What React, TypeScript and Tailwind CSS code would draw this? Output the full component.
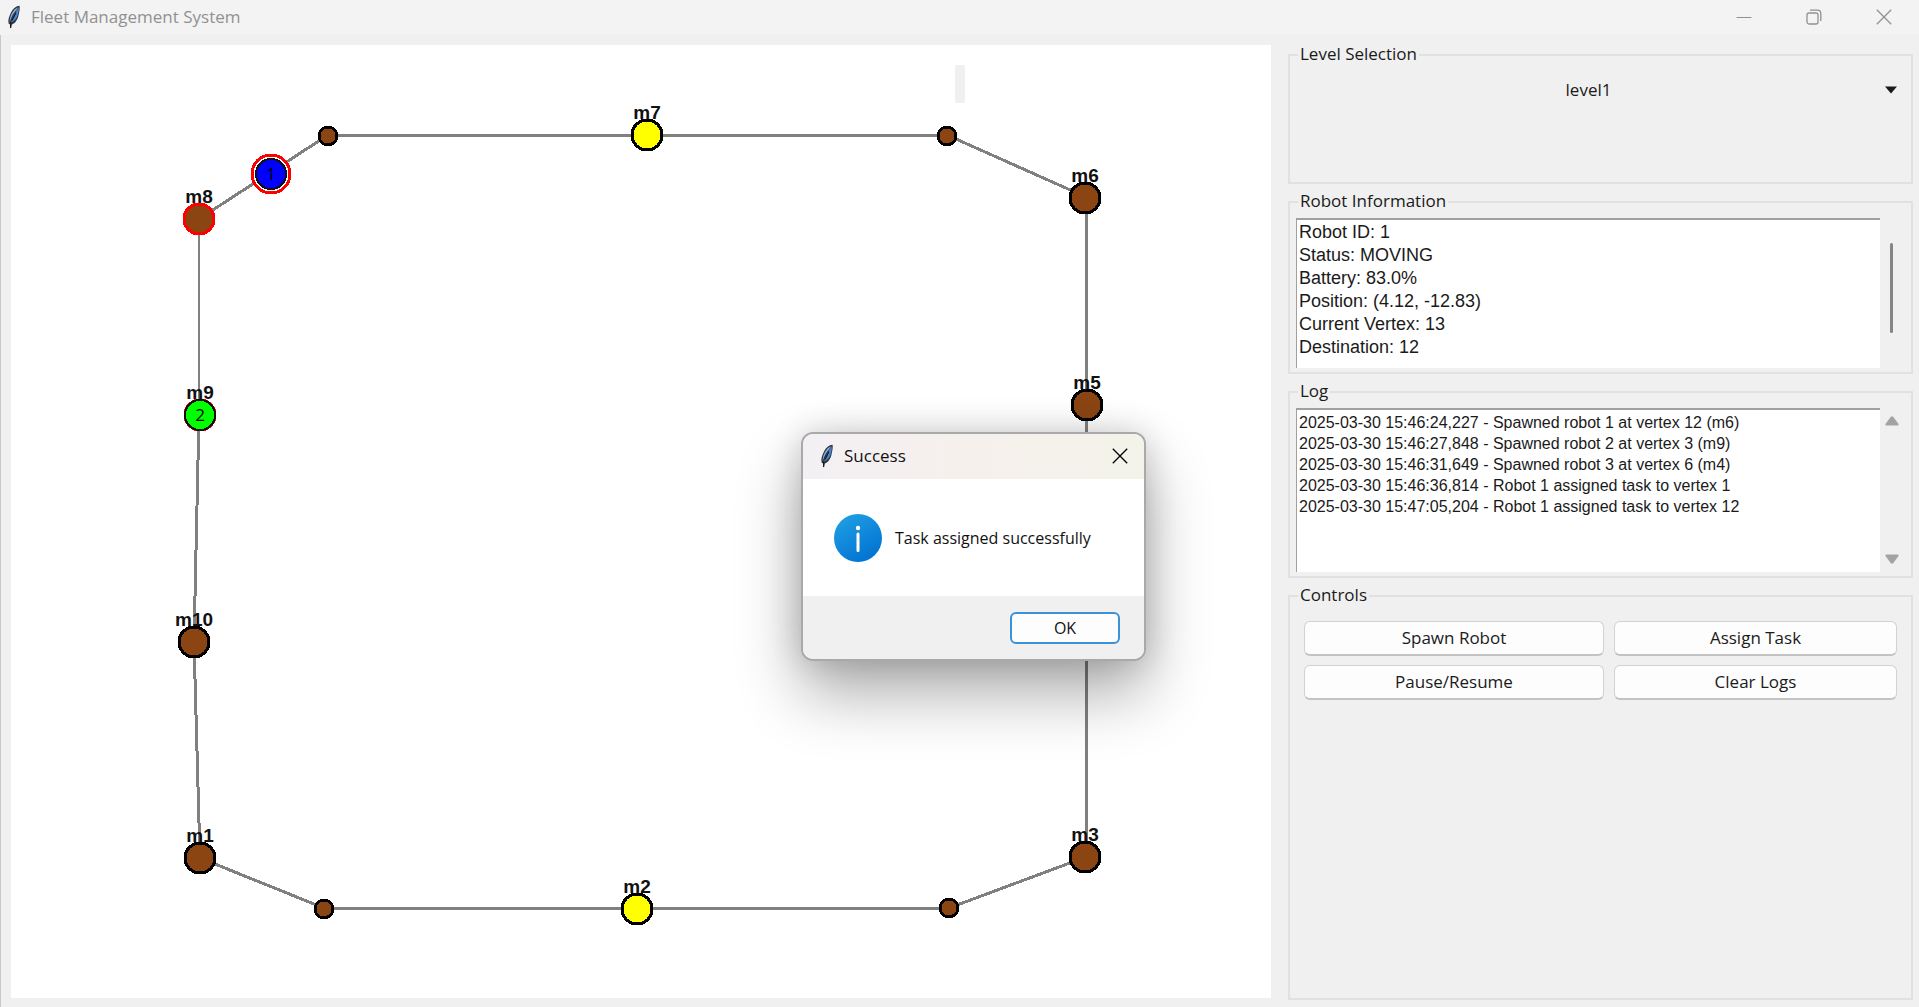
import { ReactNode } from "react";

type Vertex = { x: number; y: number; r: number; fill?: string; ring?: string; label?: string };

const VERTICES: Vertex[] = [
  { x: 317, y: 91, r: 9 },
  { x: 636, y: 90, r: 15, fill: "#ffff00", label: "m7" },
  { x: 936, y: 91, r: 9 },
  { x: 1074, y: 153, r: 15, label: "m6" },
  { x: 1076, y: 360, r: 15, label: "m5" },
  { x: 1075, y: 600, r: 15, ring: "#ff0000", label: "m4" },
  { x: 1074, y: 812, r: 15, label: "m3" },
  { x: 938, y: 863, r: 9 },
  { x: 626, y: 864, r: 15, fill: "#ffff00", label: "m2" },
  { x: 313, y: 864, r: 9 },
  { x: 189, y: 813, r: 15, label: "m1" },
  { x: 183, y: 597, r: 15, label: "m10" },
  { x: 189, y: 370, r: 15, ring: "#ff0000", label: "m9" },
  { x: 188, y: 174, r: 15, ring: "#ff0000", label: "m8" },
];

const TRACK = "317,90 936,90 1075,152 1075,812 938,863 313,863 189,813 183,597 188,370 188,174";

const ROBOTS = [
  { id: 1, x: 260, y: 129, fill: "#0000ff", selected: true },
  { id: 2, x: 189, y: 370, fill: "#00ff00", selected: false },
  { id: 3, x: 1075, y: 600, fill: "#00a040", selected: false },
];

const ROBOT_INFO = `Robot ID: 1
Status: MOVING
Battery: 83.0%
Position: (4.12, -12.83)
Current Vertex: 13
Destination: 12`;

const LOG = `2025-03-30 15:46:24,227 - Spawned robot 1 at vertex 12 (m6)
2025-03-30 15:46:27,848 - Spawned robot 2 at vertex 3 (m9)
2025-03-30 15:46:31,649 - Spawned robot 3 at vertex 6 (m4)
2025-03-30 15:46:36,814 - Robot 1 assigned task to vertex 1
2025-03-30 15:47:05,204 - Robot 1 assigned task to vertex 12`;

function Feather() {
  return (
    <svg viewBox="0 0 14 24" className="h-6 w-3.5 shrink-0" aria-hidden="true">
      <path d="M12.6 .8C9 1 6 3.500 4 7.500 2 11.500 .8 15 1.600 18.500L3 19.500 3.800 23.500 4.800 19.500C8 18.500 10.500 15 11.500 10.500 12.200 7.500 13 4 12.600 .8Z" fill="#2c3440" />
      <path d="M11.500 2.200C8.500 3 6.300 5.500 4.800 8.600 3.300 11.700 2.400 14.500 2.800 17.200 3.800 13 6 8 11.500 2.200Z" fill="#8fb4e0" />
      <path d="M11.800 2.500C8 7 5.500 12 4.200 17.600 7.600 16 9.800 13.500 10.700 10 11.400 7.500 11.900 5.500 11.800 2.500Z" fill="#4a86cf" />
      <path d="M9 7.500 5 15.500M3.600 18V23" stroke="#151a20" strokeWidth="1.200" fill="none" />
    </svg>
  );
}

function CloseIcon() {
  return (
    <svg viewBox="0 0 16 16" className="size-4" fill="none" stroke="currentColor" strokeWidth="1.300" aria-hidden="true">
      <path d="M.8 .8 15.200 15.200M15.200 .8 .8 15.200" />
    </svg>
  );
}

function TitleBar() {
  return (
    <header className="flex h-[35px] shrink-0 items-center bg-[#f3f3f3] pb-0.5 pl-[7px] text-[#919191]">
      <Feather />
      <h1 className="ml-2.5 flex-1 font-['Open_Sans',sans-serif] text-[17px] leading-6">Fleet Management System</h1>
      <button type="button" aria-label="Minimize" className="flex h-full w-[70px] items-center justify-center">
        <svg viewBox="0 0 16 16" className="size-4" stroke="currentColor" aria-hidden="true"><path d="M.5 8.500H15.500" /></svg>
      </button>
      <button type="button" aria-label="Restore" className="flex h-full w-[70px] items-center justify-center">
        <svg viewBox="0 0 16 16" className="size-4" fill="none" stroke="currentColor" strokeWidth="1.300" aria-hidden="true">
          <rect x="1" y="4" width="11" height="11" rx="2" />
          <path d="M4 1.200H11.500A3.300 3.300 0 0 1 14.800 4.500V12" />
        </svg>
      </button>
      <button type="button" aria-label="Close" className="flex h-full w-[70px] items-center justify-center">
        <CloseIcon />
      </button>
    </header>
  );
}

function FleetMap() {
  return (
    <svg className="h-full w-full" role="img" aria-label="Fleet map" shapeRendering="crispEdges">
      <rect x="944" y="20" width="10" height="38" fill="#f0f0f0" />
      <polygon points={TRACK} fill="none" stroke="#808080" strokeWidth="3" />
      {VERTICES.map((v, i) => (
        <g key={i}>
          <circle cx={v.x} cy={v.y} r={v.r} fill={v.fill ?? "#8b4513"} stroke={v.ring ?? "#000"} strokeWidth="3" />
          {v.label && (
            <text x={v.x} y={v.y - 16} textAnchor="middle" className="font-['Liberation_Sans',sans-serif] text-[19px] font-bold" fill="#111">
              {v.label}
            </text>
          )}
        </g>
      ))}
      {ROBOTS.map((r) => (
        <g key={r.id}>
          {r.selected && <circle cx={r.x} cy={r.y} r="19" fill="#fff" stroke="#f00" strokeWidth="3" />}
          <circle cx={r.x} cy={r.y} r="15" fill={r.fill} stroke="#111" strokeWidth="2" />
          <text x={r.x} y={r.y + 6} textAnchor="middle" className="font-['Open_Sans',sans-serif] text-[17px]" fill="#000">
            {r.id}
          </text>
        </g>
      ))}
    </svg>
  );
}

function Group({ title, className, children }: { title: string; className: string; children: ReactNode }) {
  return (
    <section aria-label={title} className={`flex flex-col border-2 border-[#e1e1e1] ${className}`}>
      <h2 className="-mt-[13px] ml-2 h-[23px] self-start bg-[#f0f0f0] px-0.5 text-[17px] leading-[22px]">{title}</h2>
      {children}
    </section>
  );
}

const TEXT_BOX =
  "min-w-0 flex-1 resize-none overflow-hidden border-t-2 border-l border-[#a0a0a0] bg-white pl-0.5 font-['Liberation_Sans',sans-serif] outline-none";

function Sidebar() {
  return (
    <aside className="flex w-[625px] shrink-0 flex-col gap-[17px] pt-[19px] font-['Open_Sans',sans-serif] text-[#1a1a1a]">
      <Group title="Level Selection" className="h-[130px]">
        <div className="relative mt-2.5">
          <select aria-label="Level" className="h-7 w-full appearance-none bg-transparent pr-6 text-center text-[17px] [text-align-last:center]">
            <option>level1</option>
          </select>
          <svg viewBox="0 0 12 8" className="pointer-events-none absolute top-2.5 right-3.5 h-2 w-3" aria-hidden="true"><path d="M0 .5H12L6 7.500Z" fill="#1a1a1a" /></svg>
        </div>
      </Group>
      <Group title="Robot Information" className="h-[173px]">
        <div className="mt-[5px] mb-1 ml-1.5 flex flex-1">
          <textarea aria-label="Robot Information" readOnly value={ROBOT_INFO} className={`${TEXT_BOX} pt-px text-lg leading-[23px]`} />
          <div className="flex w-[31px] justify-center pt-[25px] pr-2">
            <div className="h-[90px] w-[3px] rounded-full bg-[#858585]" />
          </div>
        </div>
      </Group>
      <Group title="Log" className="h-[187px]">
        <div className="mt-[5px] mb-1 ml-1.5 flex flex-1">
          <textarea aria-label="Log" readOnly value={LOG} className={`${TEXT_BOX} pt-0.5 text-base leading-[21px]`} />
          <div className="flex w-[31px] flex-col items-center justify-between py-2 pr-2">
            <svg viewBox="0 0 14 10" className="h-2.5 w-3.5" aria-hidden="true"><path d="M6 .5H8L13.500 8V9.500H.5V8Z" fill="#a3a3a3" /></svg>
            <svg viewBox="0 0 14 10" className="h-2.5 w-3.5" aria-hidden="true"><path d="M6 9.500H8L13.500 2V.5H.5V2Z" fill="#a3a3a3" /></svg>
          </div>
        </div>
      </Group>
      <Group title="Controls" className="mb-[7px] flex-1">
        <div className="mx-3.5 mt-3.5 grid grid-cols-[300fr_283fr] gap-x-2.5 gap-y-[9px]">
          {["Spawn Robot", "Assign Task", "Pause/Resume", "Clear Logs"].map((t) => (
            <button key={t} type="button" className="h-[35px] rounded-md border border-b-2 border-[#d2d2d2] border-b-[#c3c3c3] bg-[#fdfdfd] text-[17px] leading-6">
              {t}
            </button>
          ))}
        </div>
      </Group>
    </aside>
  );
}

function SuccessDialog() {
  return (
    <div
      role="dialog"
      aria-label="Success"
      className="absolute top-[432px] left-[801px] flex h-[229px] w-[345px] flex-col overflow-hidden rounded-xl border-2 border-[#a9a9a9] bg-white font-['Open_Sans',sans-serif] text-[#111] shadow-[0_32px_64px_rgba(0,0,0,0.33),0_0_32px_rgba(0,0,0,0.16)]"
    >
      <div className="flex h-[45px] items-center bg-linear-to-r from-[#f3f0f4] via-[#f6f0ec] to-[#f3f3e9] pb-0.5 pl-[17px]">
        <Feather />
        <h2 className="ml-2.5 flex-1 text-[17px] leading-6">Success</h2>
        <button type="button" aria-label="Close dialog" className="mr-4 text-black">
          <CloseIcon />
        </button>
      </div>
      <div className="flex flex-1 items-center gap-[13px] pl-[31px]">
        <svg viewBox="0 0 48 48" className="size-12" aria-hidden="true">
          <defs>
            <linearGradient id="info" x1="0.2" y1="0" x2="0.8" y2="1">
              <stop offset="0" stopColor="#1f9fe4" />
              <stop offset="1" stopColor="#0070d0" />
            </linearGradient>
          </defs>
          <circle cx="24" cy="24" r="24" fill="url(#info)" />
          <circle cx="24" cy="14" r="2.200" fill="#fff" />
          <path d="M24 20V36.500" stroke="#fff" strokeWidth="3" strokeLinecap="round" />
        </svg>
        <p className="text-base leading-5 whitespace-nowrap">Task assigned successfully</p>
      </div>
      <div className="flex h-[63px] items-center justify-end bg-[#f0f0f0] pr-6">
        <button type="button" className="h-8 w-[110px] rounded-md border-2 border-[#3a92d8] bg-[#fdfdfd] text-base leading-5">OK</button>
      </div>
    </div>
  );
}

export default function App() {
  return (
    <div className="relative flex h-screen flex-col bg-[#f0f0f0]">
      <TitleBar />
      <main className="flex min-h-0 flex-1 border-l border-[#c8c8c8] pr-1.5">
        <div className="mt-2.5 mr-[17px] mb-[9px] ml-2.5 min-w-0 flex-1 bg-white">
          <FleetMap />
        </div>
        <Sidebar />
      </main>
      <SuccessDialog />
    </div>
  );
}
